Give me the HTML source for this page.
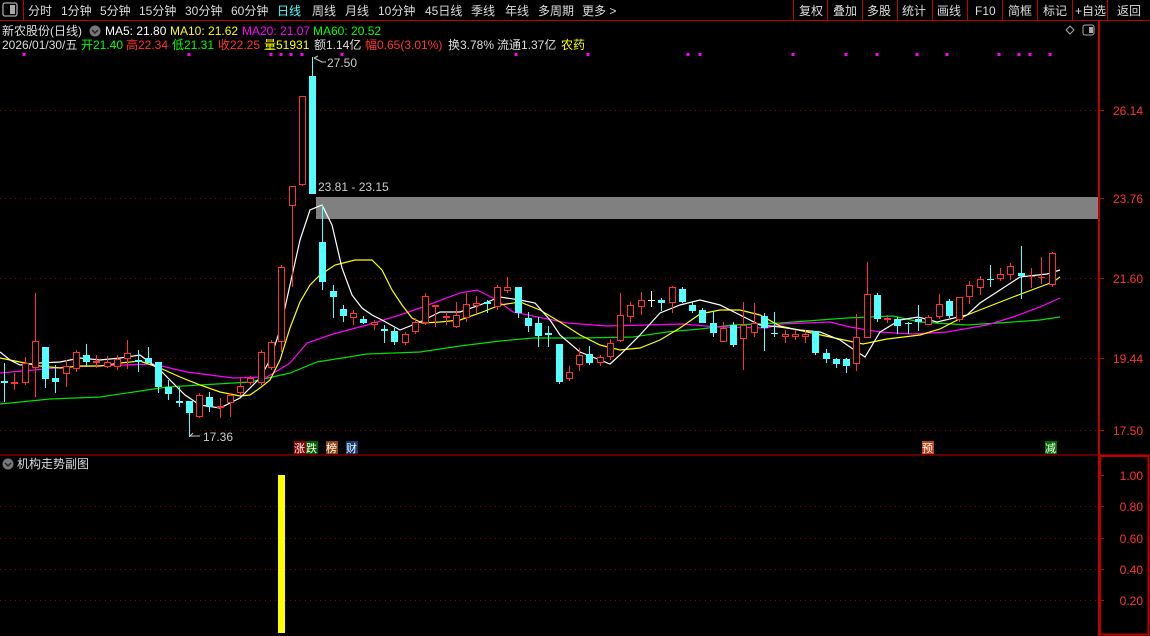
<!DOCTYPE html>
<html><head><meta charset="utf-8">
<style>
html,body{margin:0;padding:0;background:#000;width:1150px;height:636px;overflow:hidden;font-family:"Liberation Sans","Noto Sans CJK SC",sans-serif;}
svg{position:absolute;left:0;top:0}
text{font-family:"Liberation Sans","Noto Sans CJK SC",sans-serif;}
</style></head><body>
<svg id="s" width="1150" height="636" viewBox="0 0 1150 636" xmlns="http://www.w3.org/2000/svg">
<rect width="1150" height="636" fill="#000"/>
<!-- toolbar -->
<line x1="0" y1="20.5" x2="1150" y2="20.5" stroke="#c00000"/>
<rect x="3" y="3" width="14" height="13" rx="2" fill="none" stroke="#aaa" stroke-width="1.3"/>
<rect x="10" y="5" width="5" height="9" fill="#aaa"/>
<line x1="23.5" y1="0" x2="23.5" y2="20" stroke="#c00000"/>
<g font-size="12" fill="#ddd">
<text x="28" y="15">分时</text><text x="61" y="15">1分钟</text><text x="100" y="15">5分钟</text><text x="139" y="15">15分钟</text><text x="185" y="15">30分钟</text><text x="231" y="15">60分钟</text>
<text x="277" y="15" fill="#4ff">日线</text><text x="312" y="15">周线</text><text x="345" y="15">月线</text><text x="378" y="15">10分钟</text><text x="425" y="15">45日线</text><text x="471" y="15">季线</text><text x="505" y="15">年线</text><text x="538" y="15">多周期</text><text x="582" y="15">更多 &gt;</text>
<text x="799" y="15">复权</text><text x="833" y="15">叠加</text><text x="867" y="15">多股</text><text x="902" y="15">统计</text><text x="937" y="15">画线</text><text x="975" y="15">F10</text><text x="1008" y="15">简框</text><text x="1043" y="15">标记</text><text x="1075" y="15">+自选</text><text x="1117" y="15">返回</text>
</g>
<g stroke="#c00000"><line x1="793.5" y1="0" x2="793.5" y2="20"/><line x1="827.5" y1="0" x2="827.5" y2="20"/><line x1="862.5" y1="0" x2="862.5" y2="20"/><line x1="897.5" y1="0" x2="897.5" y2="20"/><line x1="932.5" y1="0" x2="932.5" y2="20"/><line x1="967.5" y1="0" x2="967.5" y2="20"/><line x1="1002.5" y1="0" x2="1002.5" y2="20"/><line x1="1037.5" y1="0" x2="1037.5" y2="20"/><line x1="1072.5" y1="0" x2="1072.5" y2="20"/><line x1="1107.5" y1="0" x2="1107.5" y2="20"/></g>
<!-- info -->
<g font-size="12">
<text x="2" y="35" fill="#ddd">新农股份(日线)</text>
<circle cx="95" cy="31" r="5.5" fill="#777"/><path d="M92 30 L95 33 L98 30" stroke="#222" fill="none" stroke-width="1.5"/>
<text x="105" y="35" fill="#fff">MA5: 21.80</text><text x="170" y="35" fill="#ff0">MA10: 21.62</text><text x="242" y="35" fill="#f0f">MA20: 21.07</text><text x="313" y="35" fill="#0f0">MA60: 20.52</text>
<text x="2" y="49" fill="#ddd">2026/01/30/五</text>
<text x="81" y="49" fill="#0f0">开21.40</text><text x="126" y="49" fill="#f33">高22.34</text><text x="172" y="49" fill="#0f0">低21.31</text><text x="218" y="49" fill="#f33">收22.25</text><text x="264" y="49" fill="#ff0">量51931</text><text x="314" y="49" fill="#ddd">额1.14亿</text><text x="365" y="49" fill="#f33">幅0.65(3.01%)</text><text x="448" y="49" fill="#ddd">换3.78%</text><text x="497" y="49" fill="#ddd">流通1.37亿</text><text x="561" y="49" fill="#ff0">农药</text>
</g>
<path d="M1070 26 L1074 30 L1070 34 L1066 30 Z" fill="none" stroke="#aaa"/>
<rect x="1083" y="25" width="11" height="10" rx="2" fill="none" stroke="#aaa"/><rect x="1089" y="27" width="4" height="6" fill="#aaa"/>
<!-- axes -->
<line x1="1099" y1="20" x2="1099" y2="636" stroke="#c00000" stroke-width="2"/>
<line x1="0" y1="455" x2="1150" y2="455" stroke="#c00000"/>
<rect x="1100" y="456" width="48.5" height="178.5" fill="none" stroke="#c00000" stroke-width="2"/>
<g stroke="#8a0000" stroke-dasharray="1,4">
<line x1="0" y1="110.5" x2="1097" y2="110.5"/><line x1="0" y1="198.5" x2="1097" y2="198.5"/><line x1="0" y1="278.5" x2="1097" y2="278.5"/><line x1="0" y1="358.5" x2="1097" y2="358.5"/><line x1="0" y1="430.5" x2="1097" y2="430.5"/>
<line x1="0" y1="506.5" x2="1097" y2="506.5"/><line x1="0" y1="538.5" x2="1097" y2="538.5"/><line x1="0" y1="569.5" x2="1097" y2="569.5"/><line x1="0" y1="600.5" x2="1097" y2="600.5"/>
</g>
<g stroke="#c00000"><line x1="1099" y1="110.5" x2="1104" y2="110.5"/><line x1="1099" y1="198.5" x2="1104" y2="198.5"/><line x1="1099" y1="278.5" x2="1104" y2="278.5"/><line x1="1099" y1="358.5" x2="1104" y2="358.5"/><line x1="1099" y1="430.5" x2="1104" y2="430.5"/>
<line x1="1100" y1="475.5" x2="1104" y2="475.5"/><line x1="1100" y1="506.5" x2="1104" y2="506.5"/><line x1="1100" y1="538.5" x2="1104" y2="538.5"/><line x1="1100" y1="569.5" x2="1104" y2="569.5"/><line x1="1100" y1="600.5" x2="1104" y2="600.5"/></g>
<g font-size="12" fill="#f33" text-anchor="end">
<text x="1143" y="115">26.14</text><text x="1143" y="203">23.76</text><text x="1143" y="283">21.60</text><text x="1143" y="363">19.44</text><text x="1143" y="435">17.50</text>
<text x="1143" y="480">1.00</text><text x="1143" y="511">0.80</text><text x="1143" y="543">0.60</text><text x="1143" y="574">0.40</text><text x="1143" y="605">0.20</text>
</g>
<!-- gray band -->
<rect x="316" y="197" width="782" height="22" fill="#808080"/>
<text x="318" y="191" font-size="12" fill="#ccc">23.81 - 23.15</text>
<text x="327" y="67" font-size="12" fill="#ccc">27.50</text>
<path d="M314 58 L322 62 L326 62 M314 58 L318 56" stroke="#ccc" fill="none"/>
<text x="203" y="441" font-size="12" fill="#ccc">17.36</text>
<path d="M190 436 L200 436 M190 436 L193 433" stroke="#ccc" fill="none"/>
<g id="dots" fill="#f0f"></g>
<g id="lines" fill="none" stroke-width="1.2"></g>
<g id="candles"></g>
<!-- markers -->
<g font-size="11">
<rect x="294" y="441" width="12" height="13" fill="#8b0000"/><text x="294" y="452" fill="#fff">涨</text>
<rect x="306" y="441" width="12" height="13" fill="#006000"/><text x="306" y="452" fill="#fff">跌</text>
<rect x="326" y="441" width="12" height="13" fill="#8b4510"/><text x="326" y="452" fill="#fff">榜</text>
<rect x="346" y="441" width="12" height="13" fill="#103a70"/><text x="346" y="452" fill="#fff">财</text>
<rect x="922" y="441" width="12" height="13" fill="#c04010"/><text x="922" y="452" fill="#fff">预</text>
<rect x="1045" y="441" width="12" height="13" fill="#007000"/><text x="1045" y="452" fill="#fff">减</text>
</g>
<!-- sub panel -->
<circle cx="8" cy="464" r="5.5" fill="#777"/><path d="M5 463 L8 466 L11 463" stroke="#222" fill="none" stroke-width="1.5"/>
<text x="17" y="468" font-size="12" fill="#ddd">机构走势副图</text>
<rect x="278" y="475" width="7" height="158" fill="#ff0"/>
</svg>
<script>
var NS="http://www.w3.org/2000/svg";
function el(p,t,a){var e=document.createElementNS(NS,t);for(var k in a)e.setAttribute(k,a[k]);p.appendChild(e);return e;}
var dots=document.getElementById('dots');
[24,189,271,281,291,302,342,516,588,688,700,793,846,877,917,947,999,1019,1030,1050].forEach(function(x){el(dots,'rect',{x:x-1.5,y:53,width:3,height:3});});
// type, top, bottom, high, low
var C=[
['c',381,383,363,402],['r',382,384,373,390],['r',363,383,357,385],['r',341,368,293,397],['c',347,379,347,388],['c',378,382,365,393],['r',366,374,360,387],['r',352,369,350,372],['c',355,362,344,367],['r',361,363,355,368],
['r',362,367,356,368],['r',359,367,355,370],['r',353,359,340,369],['c',360,362,350,372],['c',358,363,347,363],['c',362,387,362,393],['c',387,394,380,400],['c',401,403,387,407],['c',401,413,401,437],['r',395,417,393,418],
['c',397,407,392,412],['r',406,408,398,418],['r',395,403,393,417],['r',386,393,378,395],['r',378,383,376,385],['r',352,383,350,385],['r',342,368,340,370],['r',267,342,265,352],['r',186,206,186,287],['r',96,185,96,186],
['c',76,194,57,194],['c',242,282,205,290],['c',291,297,285,318],['c',309,316,305,322],['r',313,318,310,325],['c',319,323,316,324],['r',322,325,320,330],['c',329,331,325,343],['c',331,342,328,345],['r',334,343,332,345],
['r',322,332,318,334],['r',296,323,293,325],['r',305,307,305,327],['r',316,318,312,325],['r',315,327,302,328],['r',304,318,293,322],['r',303,306,296,313],['c',302,304,300,313],['r',287,307,285,310],['r',287,291,277,293],
['c',287,313,287,318],['c',318,326,312,332],['c',323,336,317,347],['c',333,335,326,347],['c',344,382,344,384],['r',372,379,366,381],['r',355,365,348,371],['c',354,363,346,365],['r',357,363,355,366],['r',343,357,339,360],
['r',315,341,293,342],['r',305,317,302,323],['r',300,307,292,315],['w',300,301,291,307],['c',300,303,298,311],['r',287,303,286,313],['c',289,302,287,303],['c',305,311,302,313],['c',310,323,308,323],['c',323,333,311,337],
['r',328,342,322,342],['c',325,345,322,347],['r',325,339,302,370],['r',323,333,303,337],['c',316,328,313,351],['c',333,334,312,337],['r',334,337,330,343],['r',334,337,330,340],['r',334,337,330,343],['c',331,353,331,355],
['c',353,359,349,363],['c',359,364,358,368],['c',359,366,358,373],['r',337,364,314,371],['r',294,338,262,338],['c',295,319,293,322],['r',318,320,315,323],['c',319,326,317,334],['c',323,324,322,334],['c',319,322,305,331],
['r',317,325,315,325],['r',304,317,294,319],['c',301,316,299,318],['r',297,320,297,322],['r',285,297,281,304],['r',279,288,276,295],['c',279,280,265,287],['r',274,279,268,281],['r',266,275,263,280],['c',273,276,246,299],
['r',276,277,268,288],['r',277,278,257,284],['r',253,285,252,287]
];
var cg=document.getElementById('candles');
C.forEach(function(c,i){
 var x=Math.round(4+i*10.27)+0.5;var col=c[0]=='r'?'#ff3030':(c[0]=='c'?'#54ffff':'#fff');
 var h=Math.max(1,c[2]-c[1]);
 if(c[0]=='r'){
  if(c[3]<c[1])el(cg,'line',{x1:x,y1:c[3],x2:x,y2:c[1],stroke:col});
  if(c[4]>c[2])el(cg,'line',{x1:x,y1:c[2],x2:x,y2:c[4],stroke:col});
  if(h<=2)el(cg,'rect',{x:x-3.5,y:c[1],width:7,height:h,fill:col});
  else el(cg,'rect',{x:x-3,y:c[1]+0.5,width:6,height:h-1,fill:'#000',stroke:col});
 }else{
  el(cg,'line',{x1:x,y1:c[3],x2:x,y2:c[4],stroke:col});
  el(cg,'rect',{x:x-3.5,y:c[1],width:7,height:h,fill:col});
 }
});
var lg=document.getElementById('lines');
function pl(col,s){el(lg,'polyline',{points:s,stroke:col});}
pl('#00e000',"0,404 50,399 100,397 167,387 250,382 290,373 317,362 367,354 420,352 460,346 500,341 533,338 580,338 633,337 667,332 700,329 733,325 780,323 847,318 893,316 920,322 967,325 1013,322 1040,320 1060,317");
pl('#ff00ff',"0,373 67,367 153,364 187,372 233,378 267,377 290,363 307,343 333,334 367,325 400,315 420,308 460,293 477,290 497,300 513,312 567,323 607,326 683,324 717,327 767,328 780,324 830,322 850,327 880,332 913,334 947,332 987,325 1013,317 1040,307 1060,298");
pl('#ffff00',"0,358 20,362 40,366 60,368 80,366 100,366 120,363 140,361 160,368 180,377 200,385 220,392 240,396 250,395 260,388 270,380 280,360 290,328 300,302 310,285 320,275 335,265 355,260 372,260 382,270 392,290 402,305 412,318 422,323 440,322 460,320 480,313 500,305 520,302 540,310 560,322 580,335 600,345 620,350 640,348 660,340 680,328 700,314 720,310 740,310 760,315 780,326 830,337 863,344 887,339 920,335 940,329 967,315 1013,297 1053,282 1060,277");
pl('#ffffff',"0,352 10,360 20,365 40,363 60,362 80,358 100,360 120,358 140,355 160,370 170,380 185,395 200,405 220,408 240,398 250,388 260,378 270,360 280,330 290,285 300,240 310,210 322,205 332,225 342,268 352,295 362,308 372,315 382,320 400,330 420,322 440,312 460,312 480,305 500,297 520,300 535,303 550,320 560,335 580,352 600,360 610,364 620,355 640,335 660,313 680,305 700,300 720,305 740,315 760,325 780,327 800,330 820,332 840,340 850,347 865,357 880,332 900,320 918,317 937,322 967,315 980,303 1000,290 1020,277 1047,274 1060,270");
</script>
</body></html>
